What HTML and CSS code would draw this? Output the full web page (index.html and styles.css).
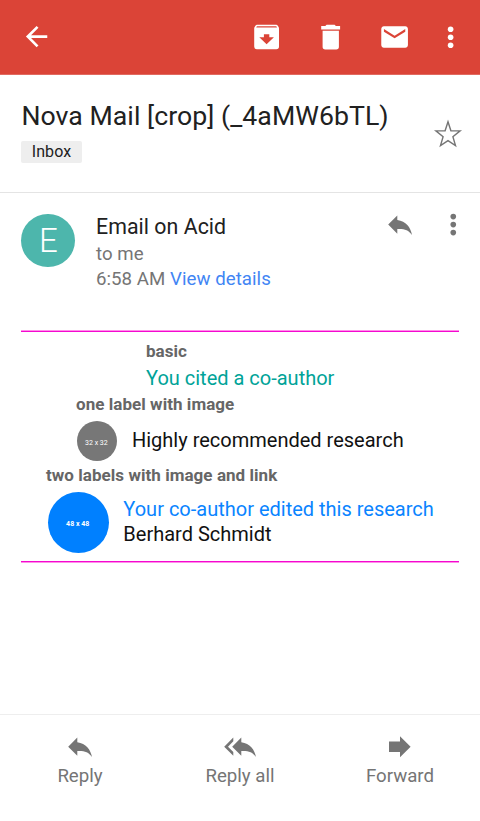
FILE: index.html
```html
<!DOCTYPE html>
<html lang="en">
<head>
<meta charset="utf-8">
<title>Nova Mail</title>
<link rel="stylesheet" href="styles.css">
</head>
<body>
<header class="toolbar">
  <svg class="icon back" viewBox="0.3 0.3 24 24"><path d="M20 11H7.83l5.59-5.59L12 4l-8 8 8 8 1.41-1.41L7.83 13H20z"/></svg>
  <svg class="icon archive" viewBox="0.4 0 32 32"><path fill-rule="evenodd" d="M6.300 3.700h19.400q.8 0 1.300.7l1 1.600q.4.7.4 1.500V25.600q0 2.700-2.700 2.700H6.300q-2.700 0-2.700-2.700V7.500q0-.8.4-1.500l1-1.600q.5-.7 1.300-.7zM6.300 5.300L5.600 6.600h20.800l-.7-1.300zM13.300 13.300v2.900H8.700l7.300 7.100 7.300-7.100h-4.600v-2.900z"/></svg>
  <svg class="icon trash" viewBox="0.4 0 32 32"><path d="M12 3.700h8l1.300 1.400h4.200v3.400H6.600V5.100h4.100zM8 9.700h16.300v16q0 2.700-2.700 2.700H10.700Q8 28.400 8 25.700z"/></svg>
  <svg class="icon mail" viewBox="0.3 0 24 24"><path d="M20 4H4c-1.100 0-1.990.9-1.990 2L2 18c0 1.100.9 2 2 2h16c1.100 0 2-.9 2-2V6c0-1.100-.9-2-2-2zm0 4l-8 5-8-5V6l8 5 8-5v2z"/></svg>
  <svg class="icon more" viewBox="0.3 -0.2 24 24"><circle cx="12" cy="6" r="2.100"/><circle cx="12" cy="12" r="2.100"/><circle cx="12" cy="18" r="2.100"/></svg>
</header>
<section class="subject">
  <div class="subject-text">
    <h1>Nova Mail [crop] (_4aMW6bTL)</h1>
    <span class="chip">Inbox</span>
  </div>
  <svg class="star" viewBox="0 0 32 32"><path d="M16 3.800L18.900 12.800 28.100 12.900 20.900 18.700 23.500 27.500 16 22.600 8.500 27.500 11.100 18.700 3.900 12.900 13.100 12.800z"/></svg>
</section>
<section class="sender">
  <div class="avatar">E</div>
  <div class="meta">
    <div class="name">Email on Acid</div>
    <div class="line">to me</div>
    <div class="line"><span class="time">6:58 AM</span> <a class="details">View details</a></div>
  </div>
  <svg class="icon gray reply" viewBox="0 0.400 32 32"><path d="M13.300 11.500V6.800L4.200 16l9.100 9.100v-4.700C20 20 24.500 21.300 28 26.300 26.500 18.600 22 12.600 13.300 11.500z"/></svg>
  <svg class="icon gray menu" viewBox="-0.200 0.300 24 24"><circle cx="12" cy="6" r="2.100"/><circle cx="12" cy="12" r="2.100"/><circle cx="12" cy="18" r="2.100"/></svg>
</section>
<main class="message">
  <section class="basic">
    <h2>basic</h2>
    <p class="teal">You cited a co-author</p>
  </section>
  <section class="single">
    <h2>one label with image</h2>
    <div class="row">
      <div class="thumb small"><span>32 x 32</span></div>
      <p>Highly recommended research</p>
    </div>
  </section>
  <section class="double">
    <h2>two labels with image and link</h2>
    <div class="row">
      <div class="thumb large"><span>48 x 48</span></div>
      <div class="labels"><p class="link">Your co-author edited this research</p><p class="person">Berhard Schmidt</p></div>
    </div>
  </section>
</main>
<footer class="actions">
  <div class="action"><svg class="icon gray" viewBox="0 0.300 32 32"><path d="M13.300 11.500V6.800L4.200 16l9.100 9.100v-4.700C20 20 24.500 21.300 28 26.300 26.500 18.600 22 12.600 13.300 11.500z"/></svg><span>Reply</span></div>
  <div class="action"><svg class="icon gray" viewBox="0 0.300 32 32"><path d="M9.300 10.500V6.800L.2 16l9.100 9.100v-3.800L4 16zM17.300 11.500V6.800L8.200 16l9.100 9.100v-4.700C24 20 28.500 21.300 32 26.300 30.500 18.600 26 12.600 17.300 11.500z"/></svg><span>Reply all</span></div>
  <div class="action"><svg class="icon gray" viewBox="0 0.300 32 32"><path d="M16 10.700V5.500L26.600 16 16 26.600v-5.300H5V10.700z"/></svg><span>Forward</span></div>
</footer>
</body>
</html>
```
FILE: styles.css
```css
* { box-sizing: border-box; }
body {
  margin: 0;
  height: 821px;
  display: flex;
  flex-direction: column;
  overflow: hidden;
  background: #fff;
  color: #212121;
  font-family: Roboto, "Liberation Sans", sans-serif;
}
h1, h2, p { margin: 0; font-weight: 400; white-space: nowrap; }
.icon { display: block; flex: none; width: 32px; height: 32px; fill: #fff; }
.gray { fill: #757575; }
.toolbar {
  flex: none;
  height: 75px;
  padding: 21px 13px 0 21px;
  display: flex;
  align-items: flex-start;
  background: #db4437;
  border-bottom: 1px solid #e16a60;
}
.archive { margin-left: auto; }
.trash, .mail { margin-left: 32px; }
.more { margin-left: 24px; }
.subject {
  flex: none;
  height: 118px;
  display: flex;
  justify-content: space-between;
  padding: 26px 16px 0 21px;
  border-bottom: 1px solid #e4e4e4;
}
h1 { font-size: 26.67px; line-height: 31px; letter-spacing: 0.05px; padding-left: 0.4px; }
.chip {
  display: block;
  width: 61px;
  height: 22px;
  margin-top: 9px;
  border-radius: 2px;
  background: #eee;
  font-size: 16px;
  line-height: 22px;
  text-align: center;
  letter-spacing: 0.1px;
}
.star { width: 32px; height: 32px; margin-top: 17px; fill: none; stroke: #757575; stroke-width: 1.4; }
.sender { flex: none; height: 137px; display: flex; padding: 21px 11px 0 21px; }
.avatar {
  width: 54px;
  height: 53.33px;
  border-radius: 50%;
  background: #4db6ac;
  color: #fff;
  font-size: 33px;
  font-weight: 300;
  line-height: 54px;
  text-align: center;
  padding-left: 1px;
}
.meta { margin-left: 21px; flex: 1; white-space: nowrap; }
.name { font-size: 21.33px; line-height: 25px; margin-bottom: 3px; letter-spacing: 0.04px; }
.line { font-size: 18.67px; line-height: 25px; color: #757575; letter-spacing: 0.04px; }
.details { color: #4285f4; }
.reply { margin-top: -5px; }
.menu { margin: -5px 0 0 21px; }
.message {
  flex: none;
  height: 233px;
  margin: 0 21px;
  padding-top: 9px;
  background:
    linear-gradient(#ff8ee8, #ff8ee8) top / 100% 1px no-repeat,
    linear-gradient(#f408d0, #f408d0) 0 1px / 100% 1px no-repeat,
    linear-gradient(#ff8ee8, #ff8ee8) bottom / 100% 1px no-repeat,
    linear-gradient(#f408d0, #f408d0) 0 231px / 100% 1px no-repeat;
}
.message h2 { font-size: 17px; font-weight: 700; line-height: 24px; color: #666; letter-spacing: 0.05px; }
.message p { font-size: 20px; line-height: 25px; color: #111; }
.basic { height: 53px; padding-left: 125px; }
.message .teal { line-height: 30px; color: #00a398; }
.single { height: 71px; padding-left: 55px; }
.double { padding-left: 25px; }
.row { display: flex; }
.thumb {
  display: flex;
  flex: none;
  align-items: center;
  justify-content: center;
  border-radius: 50%;
  color: #fff;
  white-space: nowrap;
}
.small { width: 40px; height: 40px; margin: 5px 14.6px 0 1.4px; background: #777; font-size: 7px; }
.single .row p { margin-top: 12px; }
.large { width: 61.33px; height: 61.33px; margin: 5px 14px 0 2px; background: #0080ff; font-size: 7px; font-weight: 700; }
.thumb span { padding: 3px 2px 0 0; }
.labels { margin-top: 10px; }
.message .link { color: #0a84ff; }
.actions {
  height: 107px;
  margin-top: auto;
  display: grid;
  grid-template-columns: repeat(3, 1fr);
  border-top: 1px solid #eee;
}
.action {
  padding-top: 16px;
  display: flex;
  flex-direction: column;
  align-items: center;
  color: #757575;
  font-size: 18.67px;
  line-height: 26px;
}
```
